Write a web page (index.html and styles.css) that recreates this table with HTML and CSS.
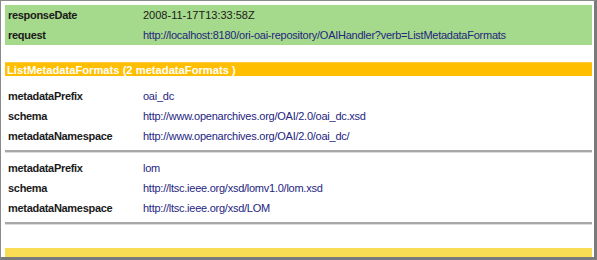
FILE: index.html
```html
<!DOCTYPE html>
<html>
<head>
<meta charset="utf-8">
<link rel="stylesheet" href="styles.css">
</head>
<body>
<div class="frame">
  <div class="head">
    <div class="row"><span class="label">responseDate</span><span class="val plain">2008-11-17T13:33:58Z</span></div>
    <div class="row"><span class="label">request</span><span class="val">http://localhost:8180/ori-oai-repository/OAIHandler?verb=ListMetadataFormats</span></div>
  </div>
  <div class="title">ListMetadataFormats (2 metadataFormats )</div>
  <div class="group first">
    <div class="row"><span class="label">metadataPrefix</span><span class="val">oai_dc</span></div>
    <div class="row"><span class="label">schema</span><span class="val">http://www.openarchives.org/OAI/2.0/oai_dc.xsd</span></div>
    <div class="row"><span class="label">metadataNamespace</span><span class="val">http://www.openarchives.org/OAI/2.0/oai_dc/</span></div>
  </div>
  <div class="rule"></div>
  <div class="group">
    <div class="row"><span class="label">metadataPrefix</span><span class="val">lom</span></div>
    <div class="row"><span class="label">schema</span><span class="val">http://ltsc.ieee.org/xsd/lomv1.0/lom.xsd</span></div>
    <div class="row"><span class="label">metadataNamespace</span><span class="val">http://ltsc.ieee.org/xsd/LOM</span></div>
  </div>
  <div class="rule"></div>
  <div class="footer"></div>
</div>
</body>
</html>
```
FILE: styles.css
```css
html, body {
  margin: 0;
  padding: 0;
  background: #ffffff;
}
.frame {
  box-sizing: border-box;
  width: 597px;
  height: 260px;
  border-left: 1px solid #8a8a8a;
  border-top: 1px solid #8a8a8a;
  border-right: 3px solid #7a7a7a;
  border-bottom: 3px solid #7a7a7a;
  padding: 4px 2px 0 4px;
  font-family: "Liberation Sans", Arial, sans-serif;
  font-size: 11px;
  display: flex;
  flex-direction: column;
}
.head {
  background: #a5d98b;
}
.row {
  display: flex;
  height: 20px;
  align-items: center;
}
.label {
  width: 135px;
  padding-left: 3px;
  font-weight: bold;
  color: #1a1a1a;
  letter-spacing: -0.3px;
  flex: none;
}
.val {
  color: #25257f;
  letter-spacing: -0.25px;
}
.val.plain {
  color: #1a1a1a;
  letter-spacing: 0;
}
.title {
  margin-top: 17px;
  height: 14px;
  line-height: 14px;
  background: #ffbf00;
  border-top: 1px solid #ffcd40;
  box-sizing: border-box;
  color: #ffffff;
  font-weight: bold;
  font-size: 11.2px;
  padding-left: 2px;
}
.group.first {
  margin-top: 10px;
}
.rule {
  height: 2px;
  margin: 4px 0 5px;
  background: #a8a8a8;
  border-bottom: 1px solid #dcdcdc;
}
.footer {
  margin-top: 18px;
  height: 9px;
  background: #f8dd55;
}
```
